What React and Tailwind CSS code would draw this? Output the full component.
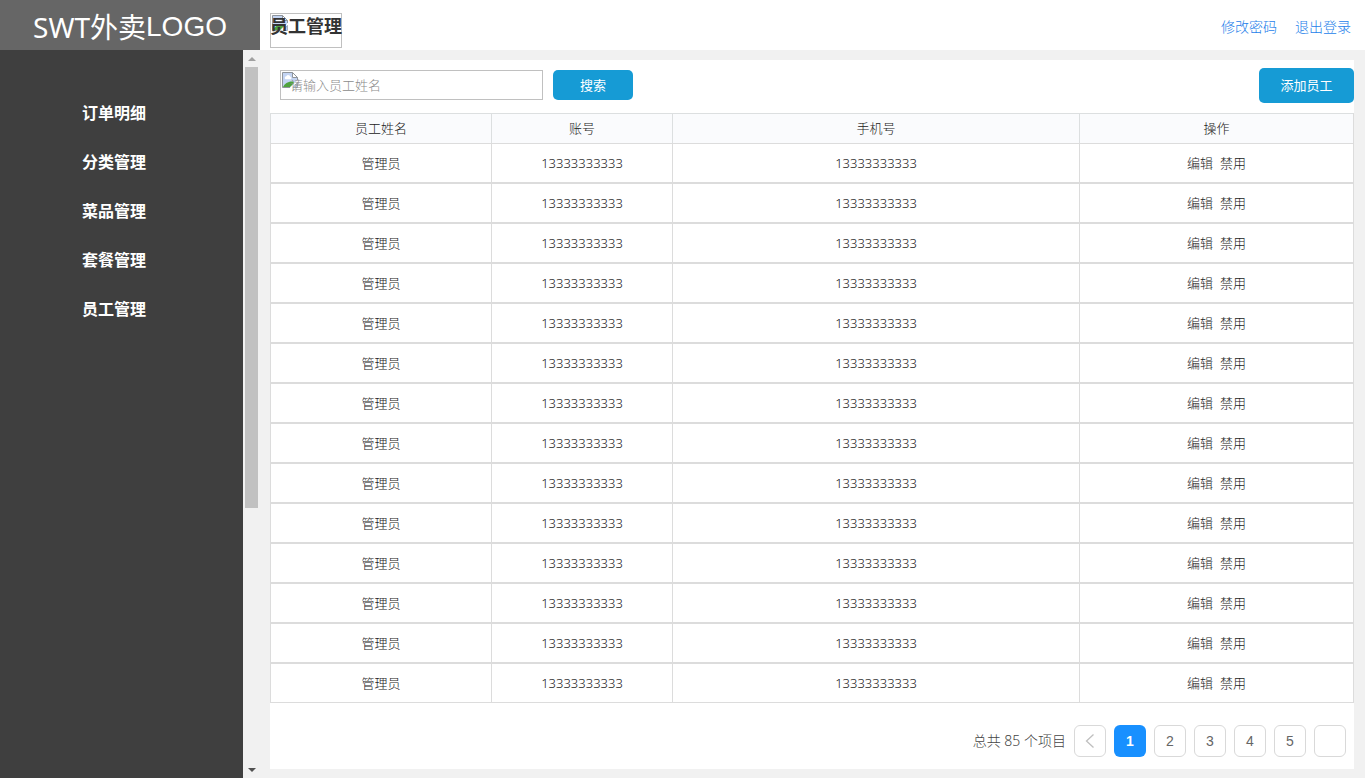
import React from "react";

const navItems = ["订单明细", "分类管理", "菜品管理", "套餐管理", "员工管理"];

const employees = Array.from({ length: 14 }, (_, i) => ({
  id: i + 1,
  name: "管理员",
  account: "13333333333",
  phone: "13333333333",
}));

const pages = [1, 2, 3, 4, 5];

function BrokenImage() {
  return (
    <svg width="16" height="16" viewBox="0 0 16 16" aria-hidden="true">
      <path d="M0.5 0.5H10.500L15.500 5.500V8.500L8.500 15.500H0.5Z" fill="#c3d4f3" />
      <path d="M3 6.800a1.700 1.700 0 0 1 1.300-2.600 2.300 2.300 0 0 1 4.200 0.800 1.200 1.200 0 0 1 0.200 2.300H3.600Z" fill="#fff" />
      <path d="M1 15C2.500 11.500 6.500 9 11 9.500L12 11 8 15Z" fill="#4fa33d" />
      <path d="M0.5 15.500V0.5H10.500L15.500 5.500V8" fill="none" stroke="#8f959c" />
      <path d="M10.500 0.5V5.500H15.500Z" fill="#fff" stroke="#8f959c" />
      <path d="M0.5 15.500H8" fill="none" stroke="#8f959c" />
      <path d="M8 16L16 8V9.500L9.500 16Z" fill="#fff" />
      <path d="M11 15.500H15.500V10.500Z" fill="#c3d4f3" stroke="#8f959c" strokeWidth="0.7" />
    </svg>
  );
}

function Sidebar() {
  return (
    <aside className="flex w-[260px] shrink-0 flex-col">
      <div className="flex h-[50px] items-center justify-center bg-[#666666] pt-1 font-['Noto_Sans','Noto_Sans_CJK_SC',sans-serif] text-[28px] leading-8 text-white">
        <span>SWT外卖</span>
        <span className="font-['Liberation_Sans',sans-serif]">LOGO</span>
      </div>
      <div className="flex flex-1">
        <nav className="flex-1 bg-[#3f3f3f] pt-[38px]">
          <ul>
            {navItems.map((item) => (
              <li key={item} className="flex h-[49px] items-center pl-[82px]">
                <a href="#" className="text-base font-bold text-white">{item}</a>
              </li>
            ))}
          </ul>
        </nav>
        <div className="flex w-[17px] flex-col items-center bg-[#f1f1f1]" aria-hidden="true">
          <div className="flex h-[17px] items-center">
            <svg width="8" height="4" viewBox="0 0 8 4"><path d="M4 0L8 4H0Z" fill="#a0a0a0" /></svg>
          </div>
          <div className="w-full flex-1 px-0.5">
            <div className="h-[441px] bg-[#c1c1c1]" />
          </div>
          <div className="flex h-[17px] items-center">
            <svg width="8" height="4" viewBox="0 0 8 4"><path d="M0 0H8L4 4Z" fill="#505050" /></svg>
          </div>
        </div>
      </div>
    </aside>
  );
}

function Header() {
  return (
    <header className="flex h-[50px] items-center justify-between bg-white pl-2.5 pr-3.5">
      <div className="relative mt-[11px] h-[35px] border border-[#c0c0c0]">
        <span className="absolute left-px top-px"><BrokenImage /></span>
        <h1 className="relative -mx-px text-lg leading-6 font-bold text-[#333333]">员工管理</h1>
      </div>
      <div className="flex gap-[18px] pt-1 text-sm font-light text-[#1c7eea]">
        <a href="#">修改密码</a>
        <a href="#">退出登录</a>
      </div>
    </header>
  );
}

function Toolbar() {
  return (
    <div className="flex h-[53px] items-start justify-between pt-2">
      <form className="flex gap-2.5 pl-2.5 pt-0.5" onSubmit={(e) => e.preventDefault()}>
        <div className="relative">
          <span className="absolute left-0.5 top-0.5"><BrokenImage /></span>
          <input
            type="text"
            aria-label="员工姓名"
            placeholder="请输入员工姓名"
            className="relative block h-[30px] w-[263px] border border-[#c0c0c0] bg-transparent pl-[9px] text-[13px] font-light text-[#333333] outline-none placeholder:text-[#8c8c8c]"
          />
        </div>
        <button type="submit" className="h-[30px] w-20 rounded-[5px] bg-[#169bd5] pt-0.5 text-[13px] text-white">搜索</button>
      </form>
      <button type="button" className="h-[35px] w-[95px] rounded-[5px] bg-[#169bd5] text-[13px] text-white">添加员工</button>
    </div>
  );
}

function EmployeeTable() {
  return (
    <table className="w-full table-fixed border-separate border-spacing-0 border-r border-[#dcdcdc] text-center text-[13px] font-light text-[#222222]">
      <colgroup>
        <col className="w-[221px]" />
        <col className="w-[181px]" />
        <col />
        <col className="w-[274px]" />
      </colgroup>
      <thead>
        <tr className="h-[30px] bg-[#fafbfd]">
          {["员工姓名", "账号", "手机号", "操作"].map((title) => (
            <th key={title} scope="col" className="border-l border-t border-[#dcdfe0] p-0 font-light">{title}</th>
          ))}
        </tr>
      </thead>
      <tbody>
        {employees.map((employee) => (
          <tr key={employee.id} className="h-10">
            <td className="border-y border-l border-[#dcdcdc] p-0 pt-0.5">{employee.name}</td>
            <td className="border-y border-l border-[#dcdcdc] p-0 pt-0.5">{employee.account}</td>
            <td className="border-y border-l border-[#dcdcdc] p-0 pt-0.5">{employee.phone}</td>
            <td className="border-y border-l border-[#dcdcdc] p-0 pt-0.5">
              <div className="flex justify-center gap-[7px]">
                <button type="button">编辑</button>
                <button type="button">禁用</button>
              </div>
            </td>
          </tr>
        ))}
      </tbody>
    </table>
  );
}

function Pagination() {
  return (
    <nav aria-label="分页" className="flex items-center justify-end gap-2 pr-2 pt-[22px] pb-3 text-sm text-[#666666]">
      <span className="font-light text-[#444444]">总共 85 个项目</span>
      <button type="button" aria-label="上一页" className="flex size-8 items-center justify-center rounded-md border border-[#d9d9d9]">
        <svg width="10" height="14" viewBox="0 0 10 14" fill="none" stroke="#bfbfbf" strokeWidth="1.3"><path d="M8.500 0.500L1.500 7L8.500 13.500" /></svg>
      </button>
      {pages.map((page) =>
        page === 1 ? (
          <button key={page} type="button" aria-current="page" className="size-8 rounded-md bg-[#1890ff] font-['Liberation_Sans',sans-serif] font-bold text-white">{page}</button>
        ) : (
          <button key={page} type="button" className="size-8 rounded-md border border-[#d9d9d9] font-['Liberation_Sans',sans-serif]">{page}</button>
        )
      )}
      <button type="button" aria-label="下一页" className="size-8 rounded-md border border-[#d9d9d9]" />
    </nav>
  );
}

export default function App() {
  return (
    <div className="flex min-h-screen bg-white pr-0.5 pb-0.5 font-['Noto_Sans','Noto_Sans_CJK_SC',sans-serif]">
      <Sidebar />
      <div className="flex min-w-0 flex-1 flex-col bg-[#f1f1f1]">
        <Header />
        <main className="mt-2.5 mr-[11px] mb-[9px] ml-2.5 flex-1 bg-white">
          <Toolbar />
          <EmployeeTable />
          <Pagination />
        </main>
      </div>
    </div>
  );
}
